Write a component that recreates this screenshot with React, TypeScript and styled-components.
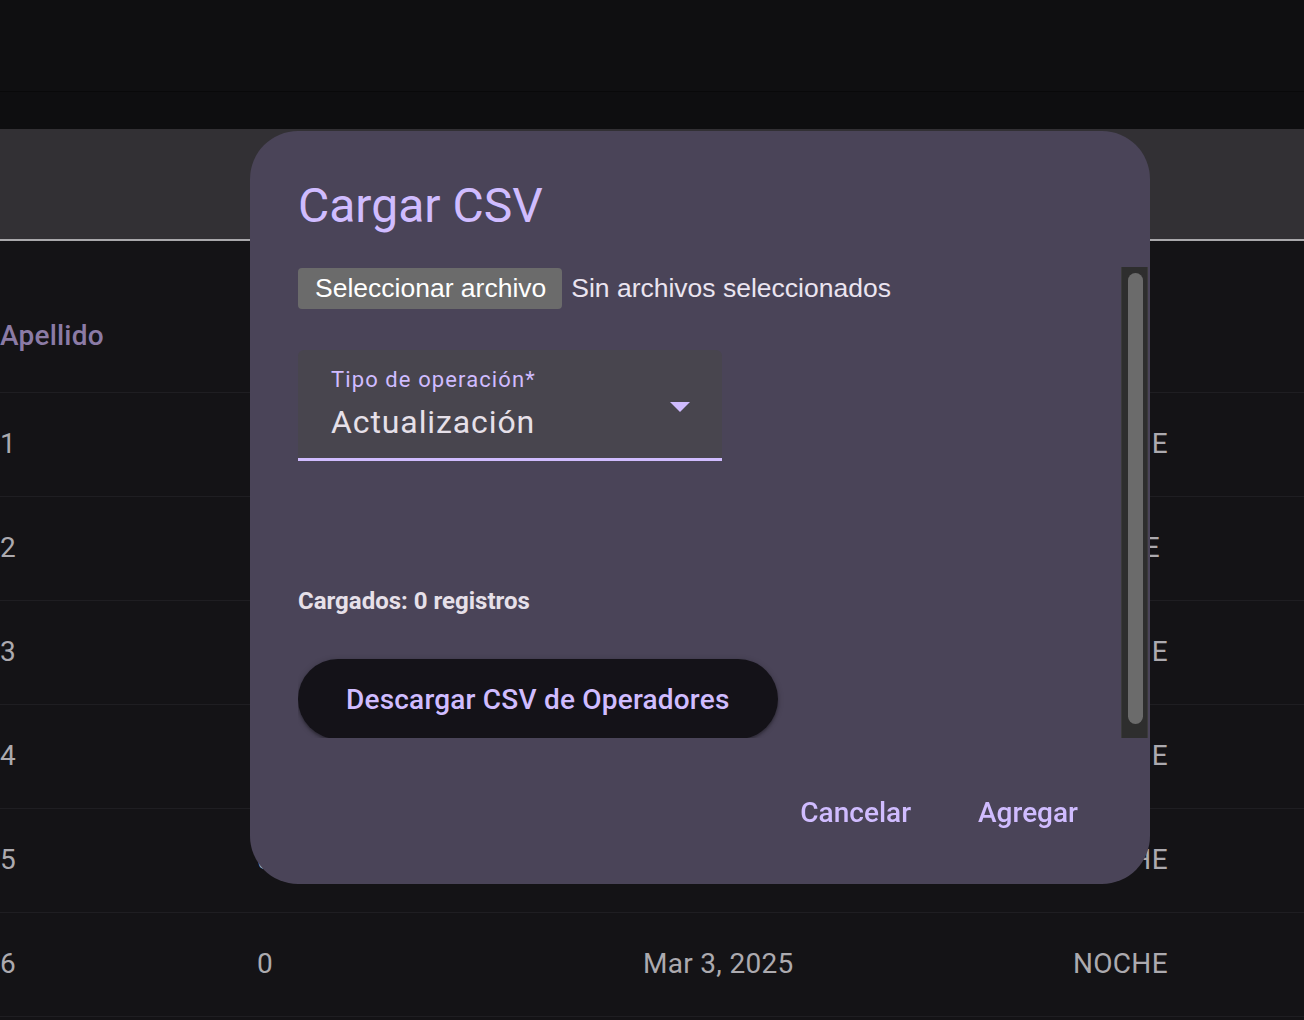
import React from "react";
import styled, { createGlobalStyle } from "styled-components";

const Global = createGlobalStyle`
  html, body { margin: 0; padding: 0; background: #141316; }
  body { font-family: Roboto, "Noto Sans", sans-serif; overflow: hidden; }
  * { box-sizing: border-box; }
`;

const Page = styled.div`
  width: 1304px;
  height: 1020px;
  overflow: hidden;
  display: flex;
  flex-direction: column;
  background: #141316;
`;

const AppBar = styled.div`
  height: 92px;
  background: #0f0f11;
  border-bottom: 1px solid #09090a;
  flex-shrink: 0;
`;

const SubBar = styled.div`
  height: 37px;
  background: #0e0e10;
  flex-shrink: 0;
`;

const Toolbar = styled.div`
  height: 112px;
  background: #323034;
  border-bottom: 2px solid #a9a8ab;
  flex-shrink: 0;
`;

const Grid = styled.div`
  display: grid;
  grid-template-columns: 257px 386px 430px 1fr;
  border-bottom: 1px solid #1f1e22;
  flex-shrink: 0;
`;

const HeaderRow = styled(Grid)`
  height: 152px;
  align-items: start;
  padding-top: 78px;
`;

const BodyRow = styled(Grid)`
  height: 104px;
  align-items: center;
  padding-bottom: 2px;
`;

const HeadCell = styled.div`
  font-size: 28px;
  font-weight: 500;
  color: #8b7ba6;
  line-height: 34px;
  letter-spacing: 0.2px;
`;

const Cell = styled.div`
  font-size: 28px;
  color: #acaaaf;
  line-height: 34px;
  letter-spacing: 0.3px;
`;

const Dialog = styled.div`
  position: fixed;
  left: 250px;
  top: 131px;
  width: 900px;
  height: 753px;
  background: #4a4458;
  border-radius: 48px;
  display: flex;
  flex-direction: column;
  padding-top: 43px;
`;

const Title = styled.h2`
  margin: 0 0 29px 48px;
  font-size: 48px;
  line-height: 64px;
  font-weight: 400;
  color: #d0bcff;
`;

const ContentArea = styled.div`
  height: 471px;
  margin: 0 2px 0 48px;
  display: flex;
  flex-shrink: 0;
`;

const Content = styled.div`
  flex: 1;
  overflow: hidden;
  display: flex;
  flex-direction: column;
  align-items: flex-start;
`;

const Track = styled.div`
  width: 27px;
  background: #2e2e2e;
  border-left: 1px solid #3a3a3a;
  border-right: 1px solid #3a3a3a;
  padding: 6px 4px 14px 6px;
  display: flex;
`;

const Thumb = styled.div`
  flex: 1;
  background: #6b6b6b;
  border-radius: 8px;
`;

const FileRow = styled.div`
  margin-top: 1px;
  height: 41px;
  display: flex;
  align-items: center;
  gap: 9px;
  font-family: "Liberation Sans", Arial, sans-serif;
  font-size: 26.5px;
`;

const FileButton = styled.button`
  height: 41px;
  padding: 0 16px 0 17px;
  background: #6b6b6b;
  color: #ffffff;
  border: none;
  border-radius: 4px;
  font: inherit;
`;

const FileStatus = styled.span`
  color: #ebe4f0;
`;

const Select = styled.div`
  margin-top: 41px;
  width: 424px;
  height: 111px;
  flex-shrink: 0;
  background: #48454e;
  border-radius: 6px 6px 0 0;
  border-bottom: 3px solid #d0bcff;
  padding: 17px 32px 0 33px;
  display: flex;
  align-items: flex-start;
`;

const SelectText = styled.div`
  flex: 1;
  display: flex;
  flex-direction: column;
  gap: 10px;
`;

const SelectLabel = styled.div`
  font-size: 22px;
  line-height: 26px;
  color: #d0bcff;
  letter-spacing: 1.1px;
`;

const SelectValue = styled.div`
  font-size: 32px;
  line-height: 38px;
  color: #e6e0e9;
  letter-spacing: 0.9px;
`;

const Arrow = styled.svg`
  margin-top: 35px;
  flex-shrink: 0;
`;

const Count = styled.div`
  margin-top: 124px;
  font-size: 24px;
  line-height: 32px;
  font-weight: 700;
  color: #e6e0e9;
`;

const PillButton = styled.button`
  margin-top: 42px;
  height: 80px;
  flex-shrink: 0;
  padding: 0 48px;
  border: none;
  border-radius: 40px;
  background: #141218;
  color: #d0bcff;
  font-family: Roboto, sans-serif;
  font-size: 28px;
  font-weight: 500;
  letter-spacing: 0.2px;
  box-shadow: 0 2px 3px rgba(0, 0, 0, 0.3), 0 1px 6px rgba(0, 0, 0, 0.2);
`;

const Actions = styled.div`
  flex: 1;
  display: flex;
  justify-content: flex-end;
  align-items: center;
  gap: 39px;
  padding: 4px 58px 0 0;
`;

const TextButton = styled.button`
  border: none;
  background: transparent;
  padding: 0 14px;
  color: #d0bcff;
  font-family: Roboto, sans-serif;
  font-size: 28px;
  font-weight: 500;
  letter-spacing: 0;
  line-height: 40px;
`;

const rows = [
  { n: "1", t: "NOCHE" },
  { n: "2", t: "TARDE" },
  { n: "3", t: "NOCHE" },
  { n: "4", t: "NOCHE" },
  { n: "5", t: "NOCHE" },
  { n: "6", t: "NOCHE" },
];

export default function App() {
  return (
    <>
      <Global />
      <Page>
        <AppBar />
        <SubBar />
        <Toolbar />
        <HeaderRow>
          <HeadCell>Apellido</HeadCell>
          <HeadCell />
          <HeadCell />
          <HeadCell />
        </HeaderRow>
        {rows.map((r) => (
          <BodyRow key={r.n}>
            <Cell>{r.n}</Cell>
            <Cell>0</Cell>
            <Cell>Mar 3, 2025</Cell>
            <Cell>{r.t}</Cell>
          </BodyRow>
        ))}
      </Page>
      <Dialog>
        <Title>Cargar CSV</Title>
        <ContentArea>
          <Content>
            <FileRow>
              <FileButton>Seleccionar archivo</FileButton>
              <FileStatus>Sin archivos seleccionados</FileStatus>
            </FileRow>
            <Select>
              <SelectText>
                <SelectLabel>Tipo de operación*</SelectLabel>
                <SelectValue>Actualización</SelectValue>
              </SelectText>
              <Arrow width="20" height="10" viewBox="0 0 20 10">
                <path d="M0 0 L20 0 L10 10 Z" fill="#d0bcff" />
              </Arrow>
            </Select>
            <Count>Cargados: 0 registros</Count>
            <PillButton>Descargar CSV de Operadores</PillButton>
          </Content>
          <Track>
            <Thumb />
          </Track>
        </ContentArea>
        <Actions>
          <TextButton>Cancelar</TextButton>
          <TextButton>Agregar</TextButton>
        </Actions>
      </Dialog>
    </>
  );
}
